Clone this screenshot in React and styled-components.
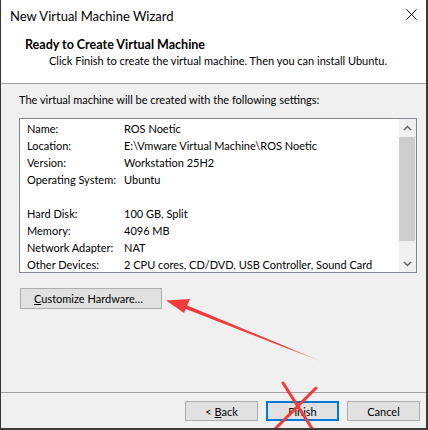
import styled, { createGlobalStyle } from "styled-components";

const GlobalStyle = createGlobalStyle`
  * { box-sizing: border-box; }
  body {
    margin: 0;
    background: #3a3a3a;
    font-family: Lato, "Liberation Sans", Arial, sans-serif;
    font-size: 11px;
    color: #000;
  }
`;

const Window = styled.div`
  position: relative;
  width: 428px;
  height: 430px;
  display: flex;
  flex-direction: column;
  background: #f0f0f0;
  border-left: 1px solid #3a3a3a;
  border-right: 2px solid #3a3a3a;
  border-bottom: 2px solid #3a3a3a;
  overflow: hidden;
`;

const TitleBar = styled.div`
  height: 31px;
  display: flex;
  align-items: center;
  justify-content: space-between;
  padding: 0 9px 0 9px;
  background: #fff;
  font-size: 13px;
`;

const CloseIcon = styled.svg`
  width: 11px;
  height: 11px;
  margin-top: -2px;
`;

const Header = styled.div`
  height: 53px;
  background: #fff;
  border-bottom: 1px solid #a0a0a0;
  padding: 6px 0 0 24px;
`;

const HeaderTitle = styled.div`
  font-weight: bold;
  font-size: 12.5px;
  line-height: 15px;
`;

const HeaderText = styled.div`
  padding-left: 24px;
  line-height: 17px;
`;

const Body = styled.div`
  flex: 1;
  padding: 8px 0 0 18px;
`;

const Intro = styled.div`
  line-height: 16px;
  margin-bottom: 10px;
`;

const ListBox = styled.div`
  width: 398px;
  height: 155px;
  display: flex;
  background: #fff;
  border: 1px solid #828790;
`;

const Rows = styled.div`
  flex: 1;
  padding: 1px 0 0 7px;
`;

const Row = styled.div`
  display: grid;
  grid-template-columns: 97px 1fr;
  height: 17px;
  line-height: 17px;
  white-space: nowrap;
`;

const ScrollBar = styled.div`
  width: 17px;
  display: flex;
  flex-direction: column;
  background: #f0f0f0;
`;

const ScrollArrow = styled.div`
  height: 17px;
  display: flex;
  align-items: center;
  justify-content: center;
`;

const ScrollThumb = styled.div`
  flex: 1;
  margin: 1px 1px 14px 0;
  background: #cdcdcd;
`;

const Button = styled.button`
  height: 21px;
  padding: 0;
  font: inherit;
  color: #000;
  background: #e1e1e1;
  border: ${(p) => (p.$default ? "2px solid #0078d7" : "1px solid #adadad")};
`;

const WideButton = styled(Button)`
  width: 142px;
  margin: 15px 0 0 1px;
  text-align: left;
  padding-left: 13px;
`;

const Footer = styled.div`
  height: 36px;
  display: flex;
  justify-content: flex-end;
  gap: 8px;
  padding: 8px 6px 0 0;
  border-top: 1px solid #a0a0a0;
`;

const DialogButton = styled(Button)`
  width: 73px;
  height: 20px;
`;

const Key = styled.u`
  text-underline-offset: 1px;
`;

const Markup = styled.svg`
  position: absolute;
  left: -1px;
  top: 0;
  width: 428px;
  height: 430px;
  pointer-events: none;
`;

const settings = [
  ["Name:", "ROS Noetic"],
  ["Location:", "E:\\Vmware Virtual Machine\\ROS Noetic"],
  ["Version:", "Workstation 25H2"],
  ["Operating System:", "Ubuntu"],
  ["", ""],
  ["Hard Disk:", "100 GB, Split"],
  ["Memory:", "4096 MB"],
  ["Network Adapter:", "NAT"],
  ["Other Devices:", "2 CPU cores, CD/DVD, USB Controller, Sound Card"],
];

function Chevron({ up }) {
  return (
    <svg width="9" height="6" viewBox="0 0 9 6">
      <path
        d={up ? "M1 5 L4.5 1.5 L8 5" : "M1 1 L4.5 4.5 L8 1"}
        fill="none"
        stroke="#606060"
        strokeWidth="1.4"
      />
    </svg>
  );
}

export default function App() {
  return (
    <>
      <GlobalStyle />
      <Window>
        <TitleBar>
          <span>New Virtual Machine Wizard</span>
          <CloseIcon viewBox="0 0 11 11">
            <path d="M0.5 0.5 L10.5 10.5 M10.5 0.5 L0.5 10.5" stroke="#000" strokeWidth="1" />
          </CloseIcon>
        </TitleBar>
        <Header>
          <HeaderTitle>Ready to Create Virtual Machine</HeaderTitle>
          <HeaderText>
            Click Finish to create the virtual machine. Then you can install Ubuntu.
          </HeaderText>
        </Header>
        <Body>
          <Intro>The virtual machine will be created with the following settings:</Intro>
          <ListBox>
            <Rows>
              {settings.map(([label, value], i) => (
                <Row key={i}>
                  <span>{label}</span>
                  <span>{value}</span>
                </Row>
              ))}
            </Rows>
            <ScrollBar>
              <ScrollArrow>
                <Chevron up />
              </ScrollArrow>
              <ScrollThumb />
              <ScrollArrow>
                <Chevron />
              </ScrollArrow>
            </ScrollBar>
          </ListBox>
          <WideButton>
            <Key>C</Key>ustomize Hardware…
          </WideButton>
        </Body>
        <Footer>
          <DialogButton>
            &lt; <Key>B</Key>ack
          </DialogButton>
          <DialogButton $default>Finish</DialogButton>
          <DialogButton>Cancel</DialogButton>
        </Footer>
        <Markup viewBox="0 0 428 430">
          <defs>
            <linearGradient id="tail" x1="167" y1="300" x2="322" y2="362" gradientUnits="userSpaceOnUse">
              <stop offset="0" stopColor="#f23a3a" />
              <stop offset="0.75" stopColor="#f23a3a" />
              <stop offset="1" stopColor="#f23a3a" stopOpacity="0" />
            </linearGradient>
          </defs>
          <polygon points="180,302.5 182,307.5 322,362 322,361.4" fill="url(#tail)" />
          <polygon points="166,300.5 190,299 184,313" fill="#f23a3a" />
          <path
            d="M283 383 L313 430 M316 388 L274 430"
            stroke="#f23a3a"
            strokeWidth="3"
            strokeLinecap="round"
          />
        </Markup>
      </Window>
    </>
  );
}
